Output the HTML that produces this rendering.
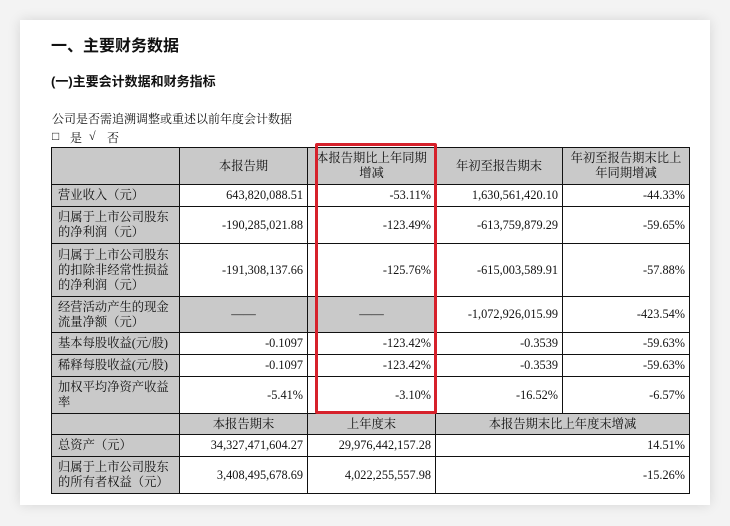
<!DOCTYPE html>
<html><head><meta charset="utf-8"><style>
body{margin:0;width:730px;height:526px;background:#f3f3f3;position:relative;overflow:hidden;font-family:"Liberation Serif","Noto Serif CJK SC",serif;color:#111}
.card{position:absolute;left:20px;top:20px;width:690px;height:485px;background:#fff;box-shadow:0 0 12px rgba(0,0,0,.12)}
.t{position:absolute;white-space:nowrap}
table{position:absolute;left:51px;top:147px;border-collapse:collapse;table-layout:fixed;font-size:12.3px}
td{border:1.2px solid #111;padding:0 4px;line-height:15px;text-align:right}
td.g{background:#c9c9c9}
td.l{text-align:left;background:#c9c9c9;padding-left:6px}
td.c{text-align:center}
.red{position:absolute;left:315px;top:143px;width:116px;height:265px;border:3px solid #d6212b;border-radius:2px}
</style></head><body>
<div class="card"></div>
<div class="t" style="left:51px;top:32px;font-size:16px;font-weight:bold;font-family:'Liberation Sans','Noto Sans CJK SC',sans-serif">一、主要财务数据</div>
<div class="t" style="left:51px;top:71px;font-size:13px;font-weight:bold;font-family:'Liberation Sans','Noto Sans CJK SC',sans-serif">(一)主要会计数据和财务指标</div>
<div class="t" style="left:52px;top:110px;font-size:12px">公司是否需追溯调整或重述以前年度会计数据</div>
<div class="t" style="left:52px;top:129px;font-size:12px"><span style="position:absolute;left:0">□</span><span style="position:absolute;left:18px">是</span><span style="position:absolute;left:37px">√</span><span style="position:absolute;left:55px">否</span>&nbsp;</div>
<table>
<colgroup><col style="width:128px"><col style="width:128px"><col style="width:128px"><col style="width:127px"><col style="width:127px"></colgroup>
<tr style="height:37px"><td class="g"></td><td class="g c">本报告期</td><td class="g c">本报告期比上年同期增减</td><td class="g c">年初至报告期末</td><td class="g c">年初至报告期末比上年同期增减</td></tr>
<tr style="height:22px"><td class="l">营业收入（元）</td><td>643,820,088.51</td><td>-53.11%</td><td>1,630,561,420.10</td><td>-44.33%</td></tr>
<tr style="height:37px"><td class="l">归属于上市公司股东的净利润（元）</td><td>-190,285,021.88</td><td>-123.49%</td><td>-613,759,879.29</td><td>-59.65%</td></tr>
<tr style="height:53px"><td class="l">归属于上市公司股东的扣除非经常性损益的净利润（元）</td><td>-191,308,137.66</td><td>-125.76%</td><td>-615,003,589.91</td><td>-57.88%</td></tr>
<tr style="height:36px"><td class="l">经营活动产生的现金流量净额（元）</td><td class="g c">——</td><td class="g c">——</td><td>-1,072,926,015.99</td><td>-423.54%</td></tr>
<tr style="height:22px"><td class="l">基本每股收益(元/股)</td><td>-0.1097</td><td>-123.42%</td><td>-0.3539</td><td>-59.63%</td></tr>
<tr style="height:22px"><td class="l">稀释每股收益(元/股)</td><td>-0.1097</td><td>-123.42%</td><td>-0.3539</td><td>-59.63%</td></tr>
<tr style="height:37px"><td class="l">加权平均净资产收益率</td><td>-5.41%</td><td>-3.10%</td><td>-16.52%</td><td>-6.57%</td></tr>
<tr style="height:21px"><td class="g"></td><td class="g c">本报告期末</td><td class="g c">上年度末</td><td class="g c" colspan="2">本报告期末比上年度末增减</td></tr>
<tr style="height:22px"><td class="l">总资产（元）</td><td>34,327,471,604.27</td><td>29,976,442,157.28</td><td colspan="2">14.51%</td></tr>
<tr style="height:37px"><td class="l">归属于上市公司股东的所有者权益（元）</td><td>3,408,495,678.69</td><td>4,022,255,557.98</td><td colspan="2">-15.26%</td></tr>
</table>
<div class="red"></div>
</body></html>
